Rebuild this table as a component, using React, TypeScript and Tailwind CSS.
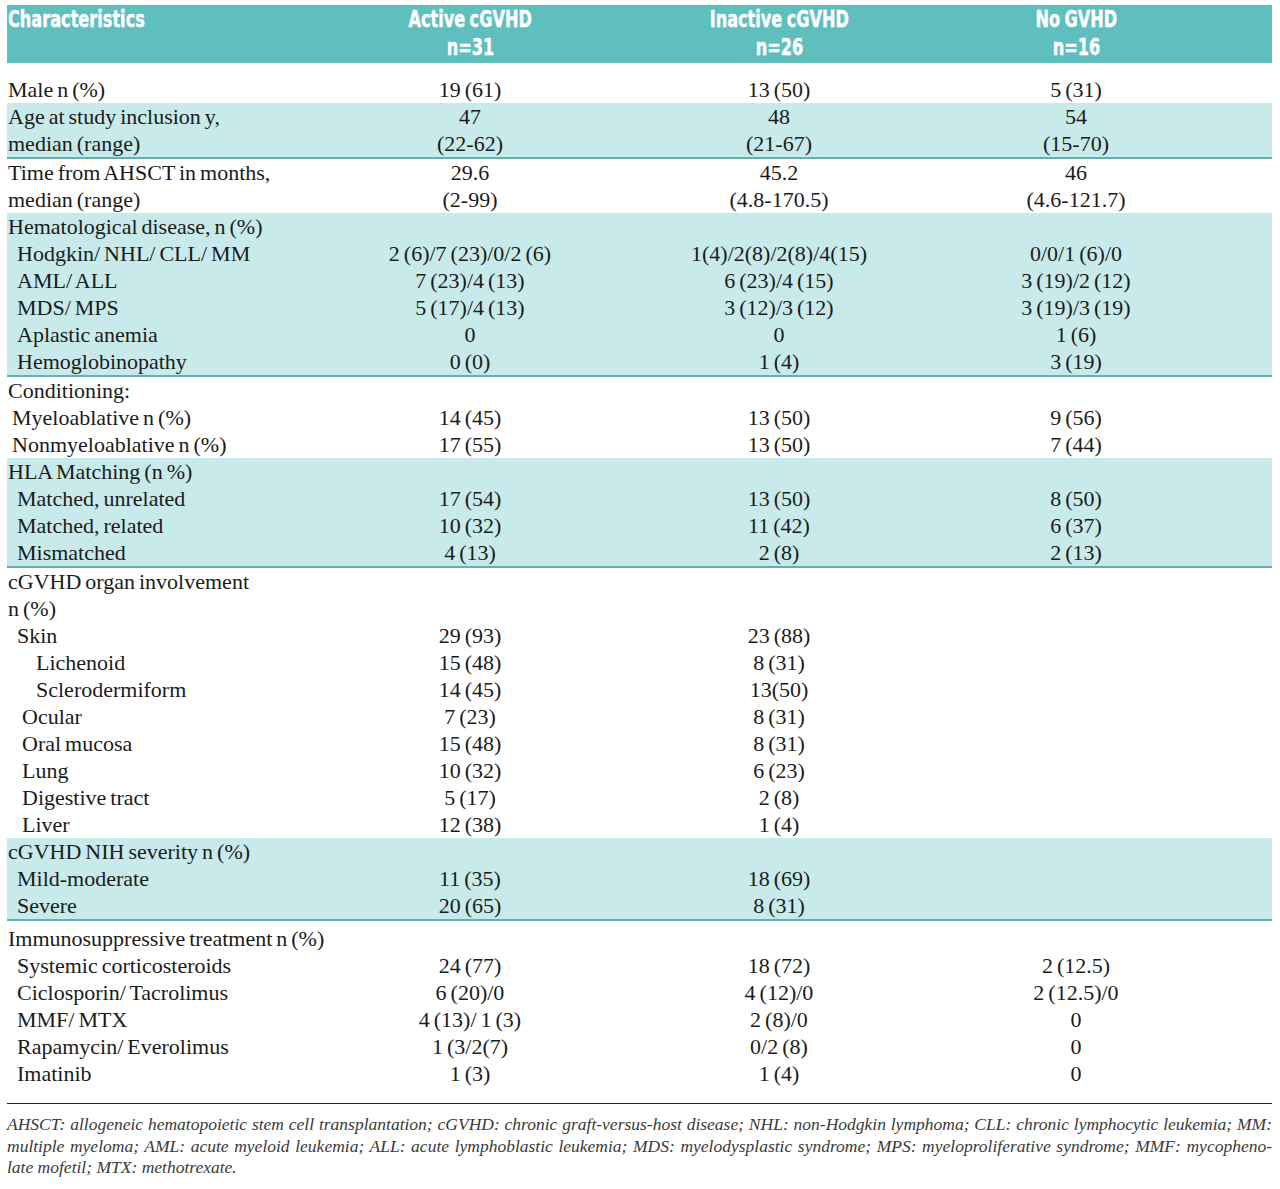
import React from "react";

type Row = {
  label: string;
  pad?: string;
  v?: [string, string, string];
};

type Group = {
  band?: boolean;
  line?: boolean;
  top?: string;
  rows: Row[];
};

const SUB = "pl-[10px]";
const SUB2 = "pl-[15px]";
const SUB3 = "pl-[29px]";

const GROUPS: Group[] = [
  {
    top: "pt-[13px]",
    rows: [{ label: "Male n (%)", v: ["19 (61)", "13 (50)", "5 (31)"] }],
  },
  {
    band: true,
    line: true,
    rows: [
      { label: "Age at study inclusion y,", v: ["47", "48", "54"] },
      { label: "median (range)", v: ["(22-62)", "(21-67)", "(15-70)"] },
    ],
  },
  {
    rows: [
      { label: "Time from AHSCT in months,", v: ["29.6", "45.2", "46"] },
      { label: "median (range)", v: ["(2-99)", "(4.8-170.5)", "(4.6-121.7)"] },
    ],
  },
  {
    band: true,
    line: true,
    rows: [
      { label: "Hematological disease, n (%)" },
      { label: "Hodgkin/ NHL/ CLL/ MM", pad: SUB, v: ["2 (6)/7 (23)/0/2 (6)", "1(4)/2(8)/2(8)/4(15)", "0/0/1 (6)/0"] },
      { label: "AML/ ALL", pad: SUB, v: ["7 (23)/4 (13)", "6 (23)/4 (15)", "3 (19)/2 (12)"] },
      { label: "MDS/ MPS", pad: SUB, v: ["5 (17)/4 (13)", "3 (12)/3 (12)", "3 (19)/3 (19)"] },
      { label: "Aplastic anemia", pad: SUB, v: ["0", "0", "1 (6)"] },
      { label: "Hemoglobinopathy", pad: SUB, v: ["0 (0)", "1 (4)", "3 (19)"] },
    ],
  },
  {
    rows: [
      { label: "Conditioning:" },
      { label: "Myeloablative n (%)", pad: "pl-[5px]", v: ["14 (45)", "13 (50)", "9 (56)"] },
      { label: "Nonmyeloablative n (%)", pad: "pl-[5px]", v: ["17 (55)", "13 (50)", "7 (44)"] },
    ],
  },
  {
    band: true,
    line: true,
    rows: [
      { label: "HLA Matching (n %)" },
      { label: "Matched, unrelated", pad: SUB, v: ["17 (54)", "13 (50)", "8 (50)"] },
      { label: "Matched, related", pad: SUB, v: ["10 (32)", "11 (42)", "6 (37)"] },
      { label: "Mismatched", pad: SUB, v: ["4 (13)", "2 (8)", "2 (13)"] },
    ],
  },
  {
    rows: [
      { label: "cGVHD organ involvement" },
      { label: "n (%)" },
      { label: "Skin", pad: SUB, v: ["29 (93)", "23 (88)", ""] },
      { label: "Lichenoid", pad: SUB3, v: ["15 (48)", "8 (31)", ""] },
      { label: "Sclerodermiform", pad: SUB3, v: ["14 (45)", "13(50)", ""] },
      { label: "Ocular", pad: SUB2, v: ["7 (23)", "8 (31)", ""] },
      { label: "Oral mucosa", pad: SUB2, v: ["15 (48)", "8 (31)", ""] },
      { label: "Lung", pad: SUB2, v: ["10 (32)", "6 (23)", ""] },
      { label: "Digestive tract", pad: SUB2, v: ["5 (17)", "2 (8)", ""] },
      { label: "Liver", pad: SUB2, v: ["12 (38)", "1 (4)", ""] },
    ],
  },
  {
    band: true,
    line: true,
    rows: [
      { label: "cGVHD NIH severity n (%)" },
      { label: "Mild-moderate", pad: SUB, v: ["11 (35)", "18 (69)", ""] },
      { label: "Severe", pad: SUB, v: ["20 (65)", "8 (31)", ""] },
    ],
  },
  {
    top: "pt-[4px]",
    rows: [
      { label: "Immunosuppressive treatment n (%)" },
      { label: "Systemic corticosteroids", pad: SUB, v: ["24 (77)", "18 (72)", "2 (12.5)"] },
      { label: "Ciclosporin/ Tacrolimus", pad: SUB, v: ["6 (20)/0", "4 (12)/0", "2 (12.5)/0"] },
      { label: "MMF/ MTX", pad: SUB, v: ["4 (13)/ 1 (3)", "2 (8)/0", "0"] },
      { label: "Rapamycin/ Everolimus", pad: SUB, v: ["1 (3/2(7)", "0/2 (8)", "0"] },
      { label: "Imatinib", pad: SUB, v: ["1 (3)", "1 (4)", "0"] },
    ],
  },
];

const SERIF = "font-['Liberation_Serif','Times_New_Roman',serif]";
const NARROW = "font-['Liberation_Sans_Narrow','DejaVu_Sans_Condensed','Liberation_Sans',sans-serif]";

function TableRow({ row }: { row: Row }) {
  return (
    <div className="flex h-[27px] items-center leading-[27px]">
      <div className={`w-[309px] shrink-0 whitespace-nowrap pl-[1px] ${row.pad ?? ""}`}>{row.label}</div>
      <div className="w-[308px] shrink-0 text-center">{row.v?.[0]}</div>
      <div className="w-[310px] shrink-0 text-center">{row.v?.[1]}</div>
      <div className="w-[284px] shrink-0 text-center">{row.v?.[2]}</div>
    </div>
  );
}

function HeadCell({ w, top, bottom }: { w: string; top: string; bottom: string }) {
  return (
    <div className={`${w} shrink-0 text-center`}>
      <span className="inline-block origin-center scale-x-[0.78] whitespace-nowrap">{top}</span>
      <br />
      <span className="inline-block origin-center scale-x-[0.78] whitespace-nowrap">{bottom}</span>
    </div>
  );
}

export default function App() {
  return (
    <div className="min-h-[1189px] w-[1280px] bg-white pl-[7px] pr-[8px] pt-[5px]">
      <div className={`text-[22px] [word-spacing:-1.5px] text-[#1b1b1b] ${SERIF}`}>
        {/* header */}
        <div
          className={`flex h-[58px] bg-[#5fbfbf] text-[23px] font-bold leading-[28px] text-white [-webkit-text-stroke:0.4px_white] ${NARROW}`}
        >
          <div className="w-[309px] shrink-0 pl-[1px]">
            <span className="inline-block origin-left scale-x-[0.78] whitespace-nowrap">Characteristics</span>
          </div>
          <HeadCell w="w-[308px]" top="Active cGVHD" bottom="n=31" />
          <HeadCell w="w-[310px]" top="Inactive cGVHD" bottom="n=26" />
          <HeadCell w="w-[284px]" top="No GVHD" bottom="n=16" />
        </div>

        {GROUPS.map((g, i) => (
          <div
            key={i}
            className={`${g.top ?? ""} ${g.band ? "bg-[#c8eaea]" : ""} ${g.line ? "border-b-2 border-[#62b0b0]" : ""}`}
          >
            {g.rows.map((r, j) => (
              <TableRow key={j} row={r} />
            ))}
          </div>
        ))}

        <div className="mt-[16px] h-px bg-[#222]" />
      </div>

      {/* footnote */}
      <div className={`mt-[10px] text-[17.5px] italic leading-[21.5px] text-[#3a3a3a] ${SERIF}`}>
        <div className="whitespace-nowrap text-justify [text-align-last:justify]">
          AHSCT: allogeneic hematopoietic stem cell transplantation; cGVHD: chronic graft-versus-host disease; NHL: non-Hodgkin lymphoma; CLL: chronic lymphocytic leukemia; MM:
        </div>
        <div className="whitespace-nowrap text-justify [text-align-last:justify]">
          multiple myeloma; AML: acute myeloid leukemia; ALL: acute lymphoblastic leukemia; MDS: myelodysplastic syndrome; MPS: myeloproliferative syndrome; MMF: mycopheno-
        </div>
        <div>late mofetil; MTX: methotrexate.</div>
      </div>
    </div>
  );
}
